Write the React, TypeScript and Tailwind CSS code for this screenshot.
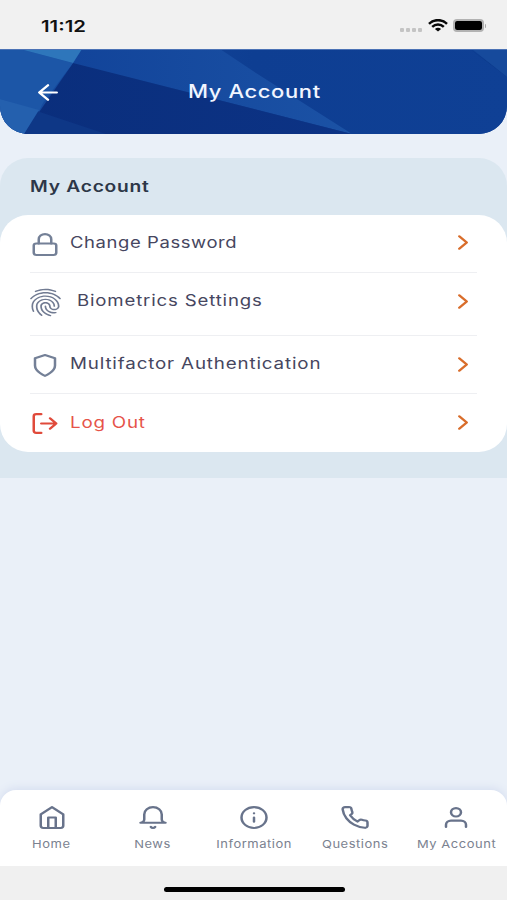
import type { ReactNode } from 'react';
import { MdFingerprint } from 'react-icons/md';

function Icon({ children, className = '' }: { children: ReactNode; className?: string }) {
  return (
    <svg
      viewBox="0 0 24 24"
      preserveAspectRatio="none"
      className={`h-[25px] w-[30px] shrink-0 ${className}`}
      fill="none"
      stroke="currentColor"
      strokeWidth="2"
      strokeLinecap="round"
      strokeLinejoin="round"
    >
      {children}
    </svg>
  );
}

function StatusBar() {
  return (
    <div className="flex h-[49px] shrink-0 items-center justify-between bg-[#f1f1f1] pr-[21px] pl-[41px]">
      <span className="mt-[2px] origin-left scale-x-[1.27] text-[16px] font-semibold text-[#111]">11:12</span>
      <div className="mt-[2px] flex items-center">
        <div className="mt-[8px] mr-[6px] flex gap-[2px]">
          {[0, 1, 2, 3].map((n) => (
            <i key={n} className="h-[4px] w-[4px] rounded-[1px] bg-[#c4c4c4]" />
          ))}
        </div>
        <svg viewBox="0 0 20 13" className="mr-[5px] h-[13px] w-[20px]" fill="none" stroke="#080808" strokeWidth="2.5">
          <path d="M1 4.8C6-.1 14-.1 19 4.8M4.2 7.8c3.3-3.1 8.3-3.1 11.6 0" />
          <path d="M10 12.6 6.9 9.9c1.8-1.5 4.4-1.5 6.2 0z" fill="#080808" stroke="none" />
        </svg>
        <div className="h-[13px] w-[31px] rounded-[4px] border-2 border-[#b2b2b2]">
          <div className="h-full rounded-[2px] bg-black" />
        </div>
        <i className="ml-[1px] h-[4px] w-[1.5px] rounded-r-full bg-[#a9a9a9]" />
      </div>
    </div>
  );
}

function Header() {
  return (
    <header className="relative flex h-[85px] shrink-0 items-center overflow-hidden rounded-b-[28px] bg-[#0e3f93]">
      <svg className="absolute inset-0 h-full w-full" viewBox="0 0 507 85" preserveAspectRatio="none">
        <defs>
          <linearGradient id="base" x1="0" x2="1">
            <stop offset="0" stopColor="#174da0" />
            <stop offset=".5" stopColor="#0e3e92" />
            <stop offset="1" stopColor="#0f4095" />
          </linearGradient>
          <linearGradient id="beam" x1="0" x2="1">
            <stop offset="0" stopColor="#12449a" />
            <stop offset="1" stopColor="#1b52a5" />
          </linearGradient>
          <linearGradient id="dark" x1="0" x2="1">
            <stop offset="0" stopColor="#0a2e7c" />
            <stop offset="1" stopColor="#0c3385" />
          </linearGradient>
        </defs>
        <path fill="url(#base)" d="M0 0h507v85H0z" />
        <path fill="url(#beam)" d="M82 0h138l33 22 99 63L73 14z" />
        <path fill="url(#dark)" d="M73 14 352 85H24z" />
        <path fill="#0e3786" d="m37 62 69 23H24z" />
        <path fill="#1c56a7" d="M0 0h20l53 14-30 40-4 8L0 50z" />
        <path fill="#2e76bb" d="M20 0h62L73 14z" />
        <path fill="#2460ae" d="m0 50 39 11-15 24H0z" />
        <path fill="#0d3a8b" d="M375 0h95l37 28v-2L470 0H375l-58 32z" />
        <path fill="#164a9c" d="M472 0h35v28z" />
      </svg>
      <Icon className="relative mt-[2px] ml-[33px] text-white">
        <path d="M19 12H5M12 19l-7-7 7-7" />
      </Icon>
      <h1 className="absolute inset-x-0 top-[31px] flex justify-center text-[18px] leading-[24px] font-medium tracking-[0.5px] text-[#f1f5ff]">
        <span className="ml-[2px] scale-x-[1.22]">My Account</span>
      </h1>
      <div className="absolute inset-x-0 top-0 h-px bg-[#4b72b5]" />
    </header>
  );
}

type RowProps = {
  icon: ReactNode;
  label: string;
  height: string;
  color?: string;
  labelClass: string;
  chevronClass?: string;
  last?: boolean;
};

function Row({ icon, label, height, color = 'text-[#464660]', labelClass, chevronClass = '', last }: RowProps) {
  return (
    <div className={`flex items-center ${height} ${last ? '' : 'border-b border-[#eeeff2]'}`}>
      <div className="mt-[2px] flex w-[30px] shrink-0 justify-center">{icon}</div>
      <span className={`origin-left text-[15.5px] leading-[24px] whitespace-nowrap ${color} ${labelClass}`}>
        {label}
      </span>
      <Icon className={`-mr-[1px] ml-auto text-[#d96d2b] ${chevronClass}`}>
        <path d="m9 18 6-6-6-6" />
      </Icon>
    </div>
  );
}

function NavItem({ label, children }: { label: string; children: ReactNode }) {
  return (
    <div className="flex w-[101.2px] flex-col items-center text-[#68738b]">
      <Icon>{children}</Icon>
      <span className="mt-[6px] scale-x-[1.18] text-[11px] leading-[16px] tracking-[0.45px] whitespace-nowrap text-[#7b8290]">
        {label}
      </span>
    </div>
  );
}

export default function App() {
  return (
    <div className="flex h-[900px] w-[507px] flex-col overflow-hidden bg-[#eaf0f8] font-['Inter','Liberation_Sans',sans-serif]">
      <StatusBar />
      <Header />
      <section className="mt-[24px] h-[320px] shrink-0 rounded-t-[28px] bg-[#dbe7f0]">
        <h2 className="flex h-[56.5px] items-center pl-[30px] text-[15.5px] font-semibold tracking-[0.6px] text-[#2d3748]">
          <span className="origin-left scale-x-[1.24]">My Account</span>
        </h2>
        <div className="rounded-[28px] bg-white px-[30px]">
          <Row
            height="h-[58px]"
            label="Change Password"
            labelClass="ml-[9.5px] scale-x-[1.19] tracking-[0.5px]"
            chevronClass="-mt-[1px]"
            icon={
              <Icon className="text-[#748097]">
                <rect x="3" y="11" width="18" height="11" rx="2" />
                <path d="M7 11V7a5 5 0 0 1 10 0v4" />
              </Icon>
            }
          />
          <Row
            height="h-[63px]"
            label="Biometrics Settings"
            labelClass="ml-[16.5px] scale-x-[1.2] tracking-[0.7px] -mt-[5px]"
            chevronClass="-mt-[4px]"
            icon={
              <MdFingerprint
                preserveAspectRatio="none"
                className="-mx-[6px] -mt-[5px] h-[33px] w-[41px] shrink-0 text-[#717b92]"
              />
            }
          />
          <Row
            height="h-[58px]"
            label="Multifactor Authentication"
            labelClass="ml-[9.5px] scale-x-[1.21] tracking-[0.7px]"
            icon={
              <Icon className="text-[#748097]">
                <path d="M12 22s8-4 8-10V5l-8-3-8 3v7c0 6 8 10 8 10z" />
              </Icon>
            }
          />
          <Row
            height="h-[58px]"
            label="Log Out"
            color="text-[#e65349]"
            labelClass="ml-[9.5px] scale-x-[1.21] tracking-[0.65px]"
            last
            icon={
              <Icon className="text-[#e04a3b]">
                <path d="M9 21H5a2 2 0 0 1-2-2V5a2 2 0 0 1 2-2h4M16 17l5-5-5-5M21 12H9" />
              </Icon>
            }
          />
        </div>
      </section>
      <nav className="mt-auto flex h-[76px] shrink-0 rounded-t-[16px] bg-white pt-[15px] pl-[1px] shadow-[0_-2px_8px_#d6def0]">
        <NavItem label="Home">
          <path d="m3 9 9-7 9 7v11a2 2 0 0 1-2 2H5a2 2 0 0 1-2-2z" />
          <path d="M9 22V12h6v10" />
        </NavItem>
        <NavItem label="News">
          <path d="M22 17H2a3 3 0 0 0 3-3V9a7 7 0 0 1 14 0v5a3 3 0 0 0 3 3zM13.73 21a2 2 0 0 1-3.46 0" />
        </NavItem>
        <NavItem label="Information">
          <circle cx="12" cy="12" r="10" />
          <path d="M12 16v-4M12 8h.01" />
        </NavItem>
        <NavItem label="Questions">
          <path d="M22 16.92v3a2 2 0 0 1-2.18 2 19.79 19.79 0 0 1-8.63-3.07 19.5 19.5 0 0 1-6-6 19.79 19.79 0 0 1-3.07-8.67A2 2 0 0 1 4.11 2h3a2 2 0 0 1 2 1.72 12.84 12.84 0 0 0 .7 2.81 2 2 0 0 1-.45 2.11L8.09 9.91a16 16 0 0 0 6 6l1.27-1.27a2 2 0 0 1 2.11-.45 12.84 12.84 0 0 0 2.81.7A2 2 0 0 1 22 16.92z" />
        </NavItem>
        <NavItem label="My Account">
          <path d="M20 21v-2a4 4 0 0 0-4-4H8a4 4 0 0 0-4 4v2" />
          <circle cx="12" cy="7" r="4" />
        </NavItem>
      </nav>
      <footer className="z-10 flex h-[34px] shrink-0 justify-center bg-[#f0f0f0] pt-[21px] pl-[1px]">
        <div className="h-[5px] w-[181px] rounded-full bg-black" />
      </footer>
    </div>
  );
}
